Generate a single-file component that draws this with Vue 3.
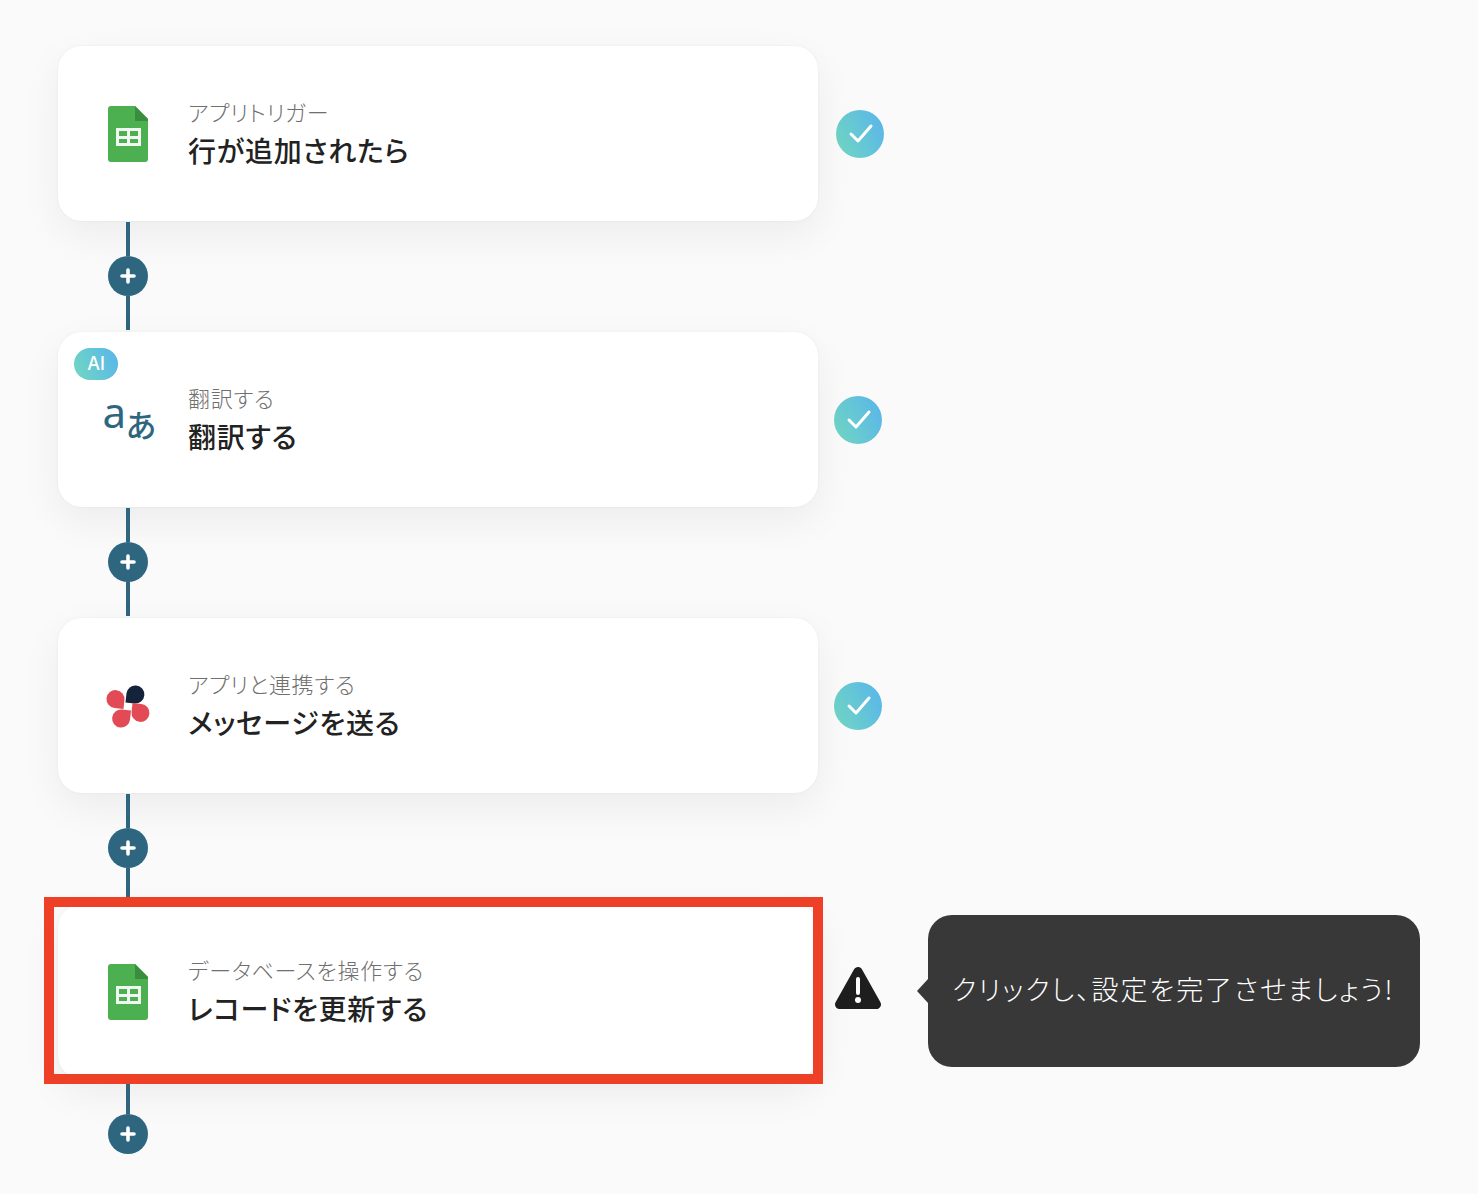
<script setup>
const steps = [
  { id: 1, label: 'アプリトリガー', title: '行が追加されたら', icon: 'sheets', status: 'done', shift: true },
  { id: 2, label: '翻訳する', title: '翻訳する', icon: 'translate', status: 'done', ai: true },
  { id: 3, label: 'アプリと連携する', title: 'メッセージを送る', icon: 'chatwork', status: 'done' },
  { id: 4, label: 'データベースを操作する', title: 'レコードを更新する', icon: 'sheets', status: 'warn', highlight: true, tail: true },
]
</script>

<template>
  <main class="flow">
    <template v-for="step in steps" :key="step.id">
      <section class="step">
        <article class="card">
          <span v-if="step.ai" class="ai">AI</span>
          <span v-if="step.highlight" class="frame"></span>

          <div class="slot">
            <svg v-if="step.icon === 'sheets'" class="icon" width="40" height="56" viewBox="0 0 40 56">
              <path d="M3 0H27L40 13V53a3 3 0 0 1-3 3H3a3 3 0 0 1-3-3V3a3 3 0 0 1 3-3Z" fill="#4caf50" />
              <path d="M27 0L40 13V15H27Z" fill="#388e3c" />
              <path d="M8 22H33V40H8ZM11 25V30H19V25ZM22 25V30H30V25ZM11 33V37H19V33ZM22 33V37H30V33Z" fill="#f1f8f1" fill-rule="evenodd" />
            </svg>

            <svg v-else-if="step.icon === 'translate'" class="icon" width="52" height="48" viewBox="0 0 52 48">
              <text x="0.5" y="32" class="latin">a</text>
              <text x="24" y="41" class="kana">あ</text>
            </svg>

            <svg v-else class="icon" width="48" height="48" viewBox="104 682 48 48">
              <path transform="translate(125.5 702.5) rotate(-84)" d="M0 0H9A9 9 0 1 1 0 9Z" fill="#14233a" />
              <path transform="translate(123.5 709) rotate(186)" d="M0 0H9A9 9 0 1 1 0 9Z" fill="#e24b55" />
              <path transform="translate(131 710.5) rotate(96)" d="M0 0H9A9 9 0 1 1 0 9Z" fill="#e24b55" />
              <path transform="translate(132.5 703) rotate(6)" d="M0 0H9A9 9 0 1 1 0 9Z" fill="#e24b55" />
            </svg>
          </div>

          <div class="copy">
            <p class="label">{{ step.label }}</p>
            <h2 class="title">{{ step.title }}</h2>
          </div>
        </article>

        <div v-if="step.status === 'done'" class="check" :class="{ shifted: step.shift }">
          <svg width="48" height="48" viewBox="0 0 48 48">
            <path d="M15 24L22 31L35 16" fill="none" stroke="#fff" stroke-width="3" stroke-linecap="round" stroke-linejoin="round" />
          </svg>
        </div>

        <template v-else>
          <svg class="warn" width="46" height="42" viewBox="0 0 46 42">
            <path d="M23 4.5L41.5 37.5H4.5Z" fill="#1e1e1e" stroke="#1e1e1e" stroke-width="9" stroke-linejoin="round" />
            <path d="M23 12V26" stroke="#fff" stroke-width="4" stroke-linecap="round" />
            <circle cx="23" cy="33" r="3" fill="#fff" />
          </svg>
          <div class="tip">クリックし、設定を完了させましょう!</div>
        </template>
      </section>

      <div class="link" :class="{ tail: step.tail }">
        <span class="line"></span>
        <span class="plus">
          <svg width="18" height="18" viewBox="0 0 18 18">
            <path d="M9 3V15M3 9H15" stroke="#fff" stroke-width="3.6" stroke-linecap="round" />
          </svg>
        </span>
        <span v-if="!step.tail" class="line"></span>
      </div>
    </template>
  </main>
</template>

<style scoped>
.flow {
  display: flex;
  flex-direction: column;
  align-items: flex-start;
  padding: 46px 0 40px 58px;
  font-family: "Noto Sans CJK JP", "Noto Sans", sans-serif;
  font-feature-settings: "palt";
}

.step {
  display: flex;
  align-items: center;
  height: 175px;
}

.card {
  position: relative;
  box-sizing: border-box;
  display: flex;
  align-items: center;
  width: 760px;
  height: 175px;
  padding-left: 50px;
  border-radius: 24px;
  background: #fff;
  box-shadow: 0 0 3px rgba(0, 0, 0, 0.05), 0 14px 40px rgba(0, 0, 0, 0.06);
}

.slot {
  flex: none;
  display: flex;
  justify-content: center;
  width: 40px;
  margin-top: 1px;
}

.icon {
  flex: none;
  display: block;
  overflow: visible;
}

.latin {
  font-family: "Noto Sans", sans-serif;
  font-size: 42px;
  font-weight: 400;
  fill: #2e6680;
}

.kana {
  font-family: "Noto Sans CJK JP", sans-serif;
  font-size: 31px;
  font-weight: 500;
  fill: #2e6680;
}

.copy {
  margin: -3px 0 0 40px;
}

.label {
  margin: 0;
  font-size: 22px;
  letter-spacing: 0.7px;
  line-height: 30px;
  font-weight: 300;
  color: #6f6f6f;
}

.title {
  margin: 5px 0 0;
  font-size: 28px;
  letter-spacing: 0.75px;
  line-height: 38px;
  font-weight: 500;
  color: #222;
}

.ai {
  position: absolute;
  left: 16px;
  top: 16px;
  width: 44px;
  height: 32px;
  border-radius: 16px;
  background: linear-gradient(65deg, #72d8c0, #58b4ec);
  color: #fff;
  font-family: "Inter", sans-serif;
  font-size: 18px;
  font-weight: 500;
  line-height: 32px;
  text-align: center;
}

.frame {
  position: absolute;
  left: -14px;
  right: -5px;
  top: -7px;
  bottom: -5px;
  border: 10px solid #ed4026;
  pointer-events: none;
}

.check {
  width: 48px;
  height: 48px;
  margin: 1px 0 0 16px;
  border-radius: 50%;
  background: linear-gradient(65deg, #72d8c0, #58b4ec);
}

.check.shifted {
  margin-left: 18px;
}

.warn {
  flex: none;
  margin: 0 0 8px 17px;
}

.tip {
  position: relative;
  display: flex;
  align-items: center;
  box-sizing: border-box;
  width: 492px;
  height: 152px;
  margin: 0 0 1px 47px;
  padding: 0 0 6px 24px;
  border-radius: 24px;
  background: #383838;
  color: #fff;
  font-size: 27px;
  letter-spacing: 1.9px;
  font-weight: 300;
  white-space: nowrap;
}

.tip::before {
  content: "";
  position: absolute;
  left: -11px;
  top: 50%;
  margin-top: -12px;
  border-top: 12px solid transparent;
  border-bottom: 12px solid transparent;
  border-right: 11px solid #383838;
}

.link {
  position: relative;
  display: flex;
  flex-direction: column;
  align-items: center;
  width: 40px;
  height: 108px;
  margin: 1px 0 2px 50px;
}

.link.tail {
  margin-top: 5px;
  height: 70px;
}

.line {
  flex: 1;
  width: 4px;
  background: #2e6680;
}

.plus {
  display: flex;
  align-items: center;
  justify-content: center;
  flex: none;
  width: 40px;
  height: 40px;
  border-radius: 50%;
  background: #2e6680;
}
</style>

<style>
html,
body {
  background: #fafafa;
}
</style>
